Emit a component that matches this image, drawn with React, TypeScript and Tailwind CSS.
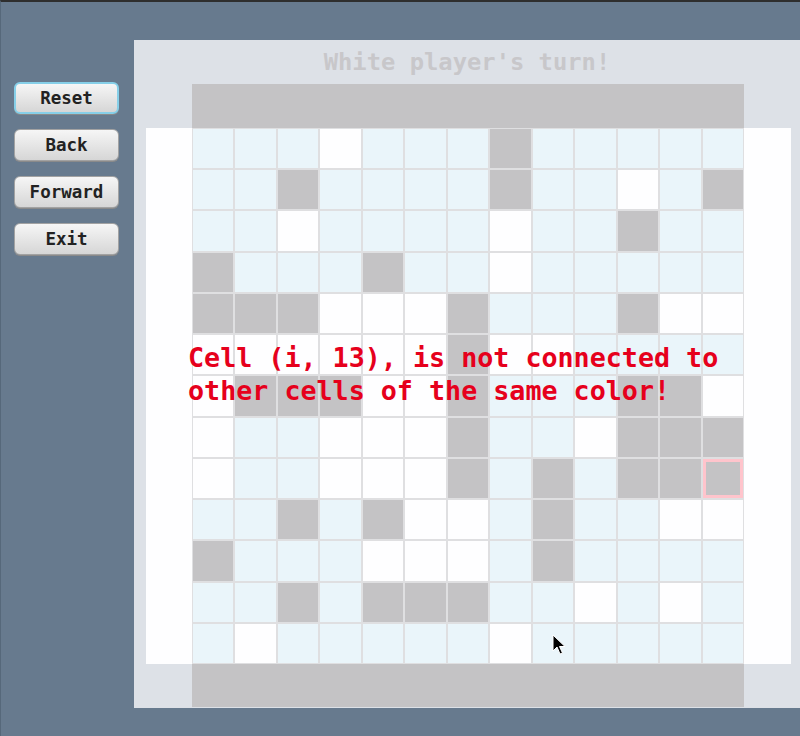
import React from 'react';

// b = light blue, w = white, g = gray stone
const BOARD: string[] = [
  'bbbwbbbgbbbbb',
  'bbgbbbbgbbwbg',
  'bbwbbbbwbbgbb',
  'gbbbgbbwbbbbb',
  'gggwwwgbbbgww',
  'wwwwwwgwwbbbb',
  'wgggwwgbbbggw',
  'wbbwwwgbbwggg',
  'wbbwwwgbgbggg',
  'bbgbgwwbgbbww',
  'gbbbwwwbgbbbb',
  'bbgbgggbbwbwb',
  'bwbbbbbwbbbbb',
];

const cellColor: Record<string, string> = {
  b: 'bg-[#eaf5fa]',
  w: 'bg-[#fefeff]',
  g: 'bg-[#c4c3c5]',
};

const mono = "font-['DejaVu_Sans_Mono',monospace]";

const SideButton: React.FC<{ label: string; focused?: boolean }> = ({ label, focused }) => (
  <button
    className={`h-[32px] w-[105px] rounded-[6px] bg-gradient-to-b from-[#f6f6f6] to-[#d6d6d6] text-[17.5px] font-bold text-[#222] shadow-[0_1px_0_#8a8a8a] ${mono} ${
      focused ? 'border-2 border-[#86cfe8]' : 'border border-[#a2a2a2]'
    }`}
  >
    {label}
  </button>
);

const Cursor: React.FC = () => (
  <svg className="absolute left-[551px] top-[632px]" width="14" height="23" viewBox="0 0 14 23">
    <path d="M1 1 L1 17 L5 13 L8 20 L10.5 19 L7.5 12.5 L13 12.5 Z" fill="#000" stroke="#fff" strokeWidth="1" />
  </svg>
);

export default function App() {
  return (
    <div className="relative h-[736px] w-[800px] overflow-hidden border-t-2 border-l border-t-[#2e2e2e] border-l-[#56687a] bg-[#677a8e]">
      <div className="flex">
        <div className="flex w-[133px] flex-col gap-[15px] pl-[13px] pt-[80px]">
          <SideButton label="Reset" focused />
          <SideButton label="Back" />
          <SideButton label="Forward" />
          <SideButton label="Exit" />
        </div>

        <div className="mt-[38px] h-[668px] w-[666px] bg-[#dde1e7]">
          <div className={`flex h-[44px] items-center justify-center pt-[2px] text-[23.8px] font-bold text-[#c8c7ca] ${mono}`}>
            White player's turn!
          </div>
          <div className="ml-[58px] h-[44px] w-[552px] bg-[#c4c3c5]" />
          <div className="ml-[12px] h-[536px] w-[645px] bg-[#fefeff] pl-[46px]">
            <div className="grid h-[536px] w-[552px] grid-cols-13 grid-rows-13 gap-[2px] bg-[#dfdfe1] p-[1px]">
              {BOARD.map((row, r) =>
                row.split('').map((c, i) => {
                  const hot = r === 8 && i === 12;
                  return (
                    <div
                      key={`${r}-${i}`}
                      className={`${cellColor[c]} ${hot ? 'border-[3px] border-[#ffc4cc]' : ''}`}
                    />
                  );
                })
              )}
            </div>
          </div>
          <div className="ml-[58px] h-[43px] w-[552px] bg-[#c4c3c5]" />
        </div>
      </div>

      <div
        className={`absolute left-[187px] top-[339px] text-[26.7px] leading-[33px] font-bold text-[#e6001c] whitespace-pre ${mono}`}
      >
        {'Cell (i, 13), is not connected to\nother cells of the same color!'}
      </div>

      <Cursor />
    </div>
  );
}
